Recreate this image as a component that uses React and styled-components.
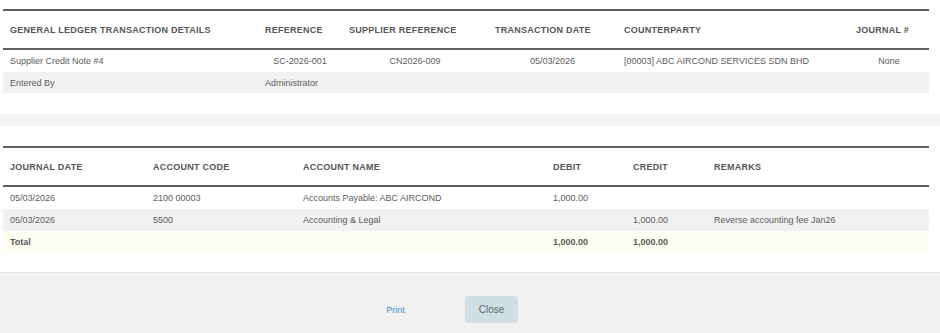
import React from "react";
import styled, { createGlobalStyle } from "styled-components";

const Global = createGlobalStyle`
  html, body { margin: 0; padding: 0; background: #fff; }
  body { font-family: "Liberation Sans", Arial, sans-serif; }
`;

const Page = styled.div`
  width: 940px;
  height: 333px;
  display: flex;
  flex-direction: column;
  overflow: hidden;
`;

const Section = styled.section`
  padding: ${(p) => p.$pad};
`;

const Table = styled.div`
  display: grid;
  grid-template-columns: ${(p) => p.$cols};
  border-top: 2px solid #5f5f5f;
`;

const HeadCell = styled.div`
  height: 37px;
  display: flex;
  align-items: center;
  padding: 0 7px;
  font-size: 9px;
  font-weight: bold;
  letter-spacing: 0.25px;
  text-transform: uppercase;
  color: #555;
  border-bottom: 2px solid #5f5f5f;
  white-space: nowrap;
`;

const Cell = styled.div`
  height: ${(p) => p.$h || 22}px;
  display: flex;
  align-items: center;
  justify-content: ${(p) => (p.$center ? "center" : "flex-start")};
  padding: 0 7px;
  font-size: 9px;
  color: #5c5c5c;
  font-weight: ${(p) => (p.$bold ? "bold" : "normal")};
  background: ${(p) =>
    p.$tone === "gray" ? "#f1f1f1" : p.$tone === "cream" ? "#fdfdf1" : "#fff"};
  grid-column: ${(p) => p.$span || "auto"};
  white-space: nowrap;
`;

const Band = styled.div`
  height: 12px;
  background: #f3f3f3;
  margin-top: 21px;
`;

const Footer = styled.footer`
  margin-top: 20px;
  flex: 1;
  background: #f1f1f1;
  border-top: 1px solid #e4e4e4;
  display: flex;
  justify-content: center;
  align-items: flex-start;
  gap: 43px;
  padding: 23px 53px 0 0;
`;

const LinkButton = styled.button`
  width: 53px;
  height: 27px;
  border: none;
  background: transparent;
  color: #3a8fd3;
  font-family: "Liberation Sans", Arial, sans-serif;
  font-size: 9px;
  padding: 0;
  cursor: pointer;
`;

const CloseButton = styled.button`
  width: 53px;
  height: 27px;
  border: none;
  border-radius: 4px;
  background: #cfdfe3;
  color: #666;
  font-family: "Liberation Sans", Arial, sans-serif;
  font-size: 10px;
  padding: 0;
  cursor: pointer;
`;

const cols1 = "255px 84px 146px 129px 232px 80px";
const cols2 = "143px 150px 250px 80px 81px 222px";

const journal = [
  { date: "05/03/2026", code: "2100 00003", name: "Accounts Payable: ABC AIRCOND", debit: "1,000.00", credit: "", remarks: "", tone: "white" },
  { date: "05/03/2026", code: "5500", name: "Accounting & Legal", debit: "", credit: "1,000.00", remarks: "Reverse accounting fee Jan26", tone: "gray" },
];

export default function App() {
  return (
    <Page>
      <Global />
      <Section $pad="9px 11px 0 3px">
        <Table $cols={cols1}>
          <HeadCell>General Ledger Transaction Details</HeadCell>
          <HeadCell>Reference</HeadCell>
          <HeadCell>Supplier Reference</HeadCell>
          <HeadCell>Transaction Date</HeadCell>
          <HeadCell>Counterparty</HeadCell>
          <HeadCell>Journal #</HeadCell>

          <Cell>Supplier Credit Note #4</Cell>
          <Cell $center>SC-2026-001</Cell>
          <Cell $center>CN2026-009</Cell>
          <Cell $center>05/03/2026</Cell>
          <Cell>[00003] ABC AIRCOND SERVICES SDN BHD</Cell>
          <Cell $center>None</Cell>

          <Cell $tone="gray" $h={21}>Entered By</Cell>
          <Cell $tone="gray" $h={21} $span="2 / 7">Administrator</Cell>
        </Table>
      </Section>
      <Band />
      <Section $pad="20px 11px 0 3px">
        <Table $cols={cols2}>
          <HeadCell>Journal Date</HeadCell>
          <HeadCell>Account Code</HeadCell>
          <HeadCell>Account Name</HeadCell>
          <HeadCell>Debit</HeadCell>
          <HeadCell>Credit</HeadCell>
          <HeadCell>Remarks</HeadCell>
          {journal.map((r, i) => (
            <React.Fragment key={i}>
              <Cell $tone={r.tone}>{r.date}</Cell>
              <Cell $tone={r.tone}>{r.code}</Cell>
              <Cell $tone={r.tone}>{r.name}</Cell>
              <Cell $tone={r.tone}>{r.debit}</Cell>
              <Cell $tone={r.tone}>{r.credit}</Cell>
              <Cell $tone={r.tone}>{r.remarks}</Cell>
            </React.Fragment>
          ))}
          <Cell $tone="cream" $bold $h={21}>Total</Cell>
          <Cell $tone="cream" $h={21} />
          <Cell $tone="cream" $h={21} />
          <Cell $tone="cream" $bold $h={21}>1,000.00</Cell>
          <Cell $tone="cream" $bold $h={21}>1,000.00</Cell>
          <Cell $tone="cream" $h={21} />
        </Table>
      </Section>
      <Footer>
        <LinkButton>Print</LinkButton>
        <CloseButton>Close</CloseButton>
      </Footer>
    </Page>
  );
}
